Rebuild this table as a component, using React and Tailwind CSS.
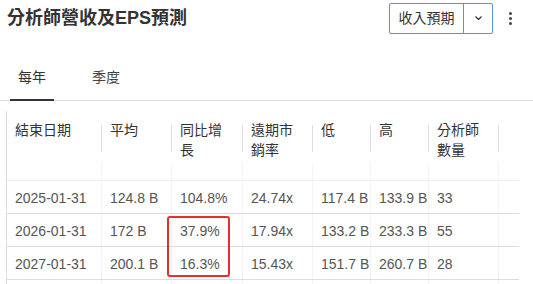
import React from "react";

const cols = [95, 70, 71, 70, 58, 58, 70];
const headers = [
  ["結束日期"],
  ["平均"],
  ["同比增", "長"],
  ["遠期市", "銷率"],
  ["低"],
  ["高"],
  ["分析師", "數量"],
];
const rows = [
  ["2025-01-31", "124.8 B", "104.8%", "24.74x", "117.4 B", "133.9 B", "33"],
  ["2026-01-31", "172 B", "37.9%", "17.94x", "133.2 B", "233.3 B", "55"],
  ["2027-01-31", "200.1 B", "16.3%", "15.43x", "151.7 B", "260.7 B", "28"],
  ["", "", "", "", "", "", ""],
];

export default function App() {
  return (
    <div
      className="relative w-[533px] h-[284px] overflow-hidden bg-white text-[#333]"
      style={{ fontFamily: '"Liberation Sans", "Noto Sans CJK TC", sans-serif' }}
    >
      {/* Header */}
      <div className="flex h-[36px] items-center justify-between pl-[7px] pr-[21px]">
        <div className="text-[18px] font-bold leading-[24px] text-[#333]">分析師營收及EPS預測</div>
        <div className="flex items-center gap-[16px]">
          <div className="flex h-[31px] w-[104px] border border-[#5592e0] rounded-[2px]">
            <div className="flex w-[74px] items-center justify-center border-r border-[#5592e0] text-[14px] text-[#333]">
              收入預期
            </div>
            <div className="flex flex-1 items-center justify-center">
              <svg width="7" height="4" viewBox="0 0 7 4">
                <polyline points="0.5,0.5 3.5,3.5 6.5,0.5" fill="none" stroke="#333" strokeWidth="1.2" />
              </svg>
            </div>
          </div>
          <div className="flex flex-col gap-[2px]">
            <div className="h-[3px] w-[3px] rounded-full bg-[#444]" />
            <div className="h-[3px] w-[3px] rounded-full bg-[#444]" />
            <div className="h-[3px] w-[3px] rounded-full bg-[#444]" />
          </div>
        </div>
      </div>

      {/* Tabs */}
      <div className="mt-[20px] flex gap-[30px] border-b border-[#dcdcdc] pl-[10px]">
        <div className="-mb-px flex h-[45px] w-[44px] items-center justify-center border-b-2 border-[#333] text-[14px] text-[#333]">
          每年
        </div>
        <div className="-mb-px flex h-[45px] w-[44px] items-center justify-center border-b-2 border-transparent text-[14px] text-[#444]">
          季度
        </div>
      </div>

      {/* Table */}
      <div className="mt-[10px] ml-[6px] w-[513px] h-[200px] border-l border-[#dddddd]">
        <div className="flex h-[52px]">
          {headers.map((h, i) => (
            <div key={i} className="flex shrink-0" style={{ width: cols[i] }}>
              <div className="flex-1 pl-[8px] pt-[9px] text-[14px] leading-[20px] text-[#333]">
                {h.map((l, j) => (
                  <div key={j}>{l}</div>
                ))}
              </div>
              <div className="mt-[14px] h-[27px] w-px bg-[#dddddd]" />
            </div>
          ))}
        </div>
        <div className="flex h-[18px] border-b border-[#eeeeee]">
          {cols.map((w, i) => (
            <div key={i} className="shrink-0 border-r border-[#f4f4f4]" style={{ width: w }} />
          ))}
        </div>
        {rows.map((r, ri) => (
          <div key={ri} className="flex h-[33px] border-b border-[#dddddd]">
            {r.map((c, ci) => (
              <div
                key={ci}
                className="flex shrink-0 items-center whitespace-nowrap border-r border-[#f4f4f4] pl-[8px] pt-[2px] text-[14px] text-[#555]"
                style={{ width: cols[ci] }}
              >
                {c}
              </div>
            ))}
          </div>
        ))}
      </div>

      {/* Highlight box */}
      <div className="absolute left-[167px] top-[216px] h-[61px] w-[63px] rounded-[3px] border-2 border-[#e8302a]" />
    </div>
  );
}
